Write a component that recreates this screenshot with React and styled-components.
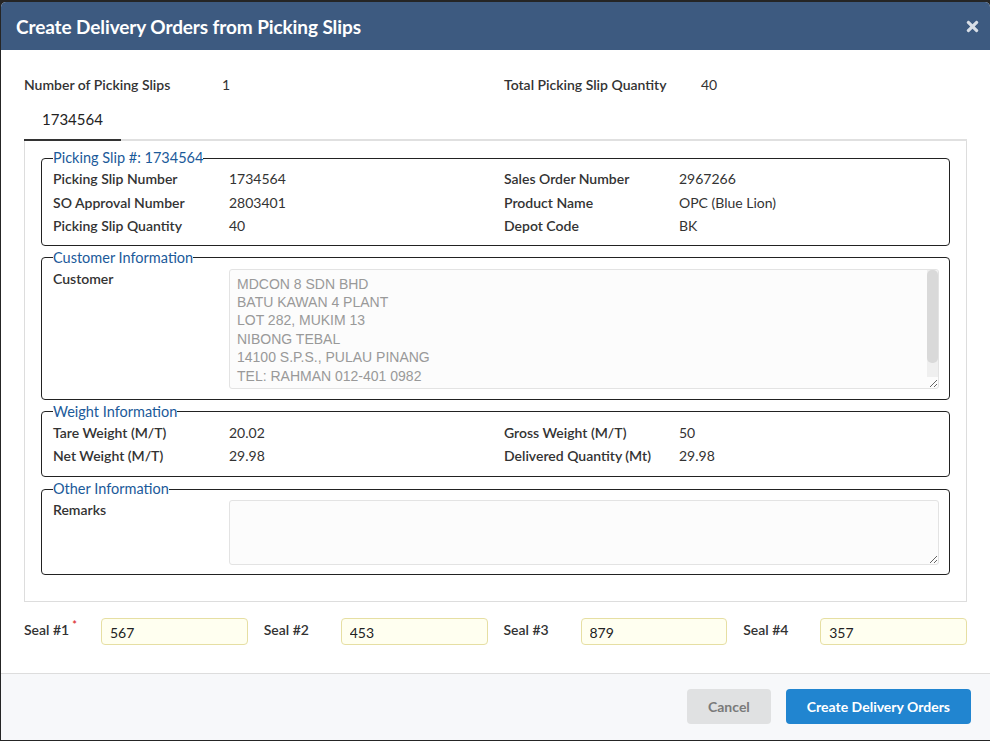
import React from 'react';
import styled, { createGlobalStyle } from 'styled-components';
import { FaTimes } from 'react-icons/fa';

const GlobalStyle = createGlobalStyle`
  html, body {
    margin: 0;
    padding: 0;
    background: #252525;
  }
  body {
    font-family: Lato, "Open Sans", sans-serif;
    color: #333;
  }
  * {
    box-sizing: border-box;
  }
`;

const Dialog = styled.div`
  margin: 2px 0 0 1px;
  width: 989px;
  background: #fff;
  border-radius: 5px 5px 0 0;
  overflow: hidden;
`;
const Header = styled.div`
  height: 48px;
  background: #3d5a80;
  display: flex;
  align-items: center;
  justify-content: space-between;
  padding: 0 9px 0 15px;
`;
const Title = styled.h1`
  margin: 0;
  font-size: 19px;
  font-weight: 700;
  color: #fff;
  letter-spacing: -0.1px;
`;
const CloseButton = styled.button`
  border: none;
  background: none;
  padding: 0;
  display: flex;
  color: #d8dee6;
  cursor: pointer;
`;
const Body = styled.div`
  padding: 25px 23px 28px 23px;
`;
const SummaryRow = styled.div`
  display: grid;
  grid-template-columns: 198px 282px 197px 1fr;
`;
const Label = styled.div`
  font-weight: 600;
  font-size: 14px;
  color: #333;
  line-height: ${p => p.lh || '23.5px'};
`;
const Value = styled.div`
  font-size: 14px;
  color: #333;
  line-height: ${p => p.lh || '23.5px'};
`;
const TabBar = styled.div`
  margin-top: 5px;
  display: flex;
  border-bottom: 2px solid #e0e0e0;
`;
const Tab = styled.div`
  height: 41px;
  line-height: 38px;
  padding: 0 18px;
  font-size: 15px;
  color: #222;
  margin-bottom: -2px;
  border-bottom: 2px solid ${p => (p.active ? '#333' : 'transparent')};
`;
const Panel = styled.div`
  border: 1px solid #ddd;
  border-top: none;
  padding: 8px 16px 26px 16px;
  display: flex;
  flex-direction: column;
  gap: 3px;
`;
const Fieldset = styled.fieldset`
  margin: 0;
  padding: 0 10px ${p => p.pb || 8}px 11px;
  border: 1px solid #222;
  border-radius: 4px;
  min-width: 0;
`;
const Legend = styled.legend`
  padding: 0;
  font-size: 14.5px;
  line-height: 18px;
  color: #1b5a9a;
`;
const InfoGrid = styled.div`
  display: grid;
  grid-template-columns: 176px 275px 175px 1fr;
`;
const TextRow = styled.div`
  display: grid;
  grid-template-columns: 176px 1fr;
  align-items: start;
`;
const TextAreaWrap = styled.div`
  position: relative;
  margin-top: 2px;
`;
const TextArea = styled.textarea`
  display: block;
  width: 100%;
  height: ${p => p.h}px;
  resize: vertical;
  border: 1px solid #e3e3e3;
  border-radius: 3px;
  background: #fcfcfc;
  color: #999;
  font-family: "Liberation Sans", Arial, sans-serif;
  font-size: 14px;
  line-height: 18.4px;
  padding: 5px 7px 3px;
  outline: none;
  overflow: hidden;
`;
const ScrollTrack = styled.div`
  position: absolute;
  top: 1px;
  right: 1px;
  bottom: 12px;
  width: 11px;
  background: #efefef;
  border-radius: 0 3px 0 0;
`;
const ScrollThumb = styled.div`
  height: 93px;
  background: #d9d9d9;
  border-radius: 5px;
`;
const SealRow = styled.div`
  margin-top: 16px;
  display: flex;
  gap: 16px;
`;
const SealGroup = styled.div`
  flex: 1 1 0;
  min-width: 0;
  display: flex;
  align-items: center;
`;
const SealLabel = styled.label`
  width: 77px;
  flex: none;
  font-size: 14px;
  font-weight: 600;
  color: #333;
  align-self: flex-start;
  padding-top: 3px;
`;
const Required = styled.span`
  color: #db2828;
  font-size: 11px;
  position: relative;
  top: -6px;
  margin-left: 3px;
`;
const SealInput = styled.input`
  flex: 1 1 0;
  width: 0;
  min-width: 0;
  height: 27px;
  border: 1px solid #e6dfa3;
  border-radius: 4px;
  background: #fffff0;
  font-family: Lato, sans-serif;
  font-size: 14px;
  color: #222;
  padding: 2px 8px 0;
  outline: none;
`;
const Footer = styled.div`
  background: #f7f8fa;
  border-top: 1px solid #ddd;
  height: 67px;
  padding: 15px 19px 0 0;
  display: flex;
  justify-content: flex-end;
  gap: 15px;
`;
const Button = styled.button`
  height: 35px;
  padding: 0 21px;
  border: none;
  border-radius: 4px;
  font-family: Lato, sans-serif;
  font-size: 14px;
  font-weight: 700;
  background: ${p => (p.primary ? '#2185d0' : '#e0e1e2')};
  color: ${p => (p.primary ? '#fff' : '#7a7a7a')};
  cursor: pointer;
`;

const customer = `MDCON 8 SDN BHD
BATU KAWAN 4 PLANT
LOT 282, MUKIM 13
NIBONG TEBAL
14100 S.P.S., PULAU PINANG
TEL: RAHMAN 012-401 0982`;

const InfoSection = ({ title, rows, pb }) => (
  <Fieldset pb={pb}>
    <Legend>{title}</Legend>
    <InfoGrid>
      {rows.map(([l1, v1, l2, v2]) => (
        <React.Fragment key={l1}>
          <Label>{l1}</Label>
          <Value>{v1}</Value>
          <Label>{l2}</Label>
          <Value>{v2}</Value>
        </React.Fragment>
      ))}
    </InfoGrid>
  </Fieldset>
);

const seals = [
  { label: 'Seal #1', value: '567', required: true },
  { label: 'Seal #2', value: '453' },
  { label: 'Seal #3', value: '879' },
  { label: 'Seal #4', value: '357' },
];

export default function App() {
  return (
    <>
      <GlobalStyle />
      <Dialog>
        <Header>
          <Title>Create Delivery Orders from Picking Slips</Title>
          <CloseButton aria-label="Close">
            <FaTimes size={17} />
          </CloseButton>
        </Header>
        <Body>
          <SummaryRow>
            <Label lh="20px">Number of Picking Slips</Label>
            <Value lh="20px">1</Value>
            <Label lh="20px">Total Picking Slip Quantity</Label>
            <Value lh="20px">40</Value>
          </SummaryRow>
          <TabBar>
            <Tab active>1734564</Tab>
          </TabBar>
          <Panel>
            <InfoSection
              title="Picking Slip #: 1734564"
              pb={7}
              rows={[
                ['Picking Slip Number', '1734564', 'Sales Order Number', '2967266'],
                ['SO Approval Number', '2803401', 'Product Name', 'OPC (Blue Lion)'],
                ['Picking Slip Quantity', '40', 'Depot Code', 'BK'],
              ]}
            />
            <Fieldset pb={10}>
              <Legend>Customer Information</Legend>
              <TextRow>
                <Label>Customer</Label>
                <TextAreaWrap>
                  <TextArea h={120} readOnly defaultValue={customer} />
                  <ScrollTrack>
                    <ScrollThumb />
                  </ScrollTrack>
                </TextAreaWrap>
              </TextRow>
            </Fieldset>
            <InfoSection
              title="Weight Information"
              pb={8.5}
              rows={[
                ['Tare Weight (M/T)', '20.02', 'Gross Weight (M/T)', '50'],
                ['Net Weight (M/T)', '29.98', 'Delivered Quantity (Mt)', '29.98'],
              ]}
            />
            <Fieldset pb={8.5}>
              <Legend>Other Information</Legend>
              <TextRow>
                <Label>Remarks</Label>
                <TextAreaWrap>
                  <TextArea h={65} defaultValue="" />
                </TextAreaWrap>
              </TextRow>
            </Fieldset>
          </Panel>
          <SealRow>
            {seals.map(s => (
              <SealGroup key={s.label}>
                <SealLabel>
                  {s.label}
                  {s.required && <Required>*</Required>}
                </SealLabel>
                <SealInput defaultValue={s.value} />
              </SealGroup>
            ))}
          </SealRow>
        </Body>
        <Footer>
          <Button>Cancel</Button>
          <Button primary>Create Delivery Orders</Button>
        </Footer>
      </Dialog>
    </>
  );
}
